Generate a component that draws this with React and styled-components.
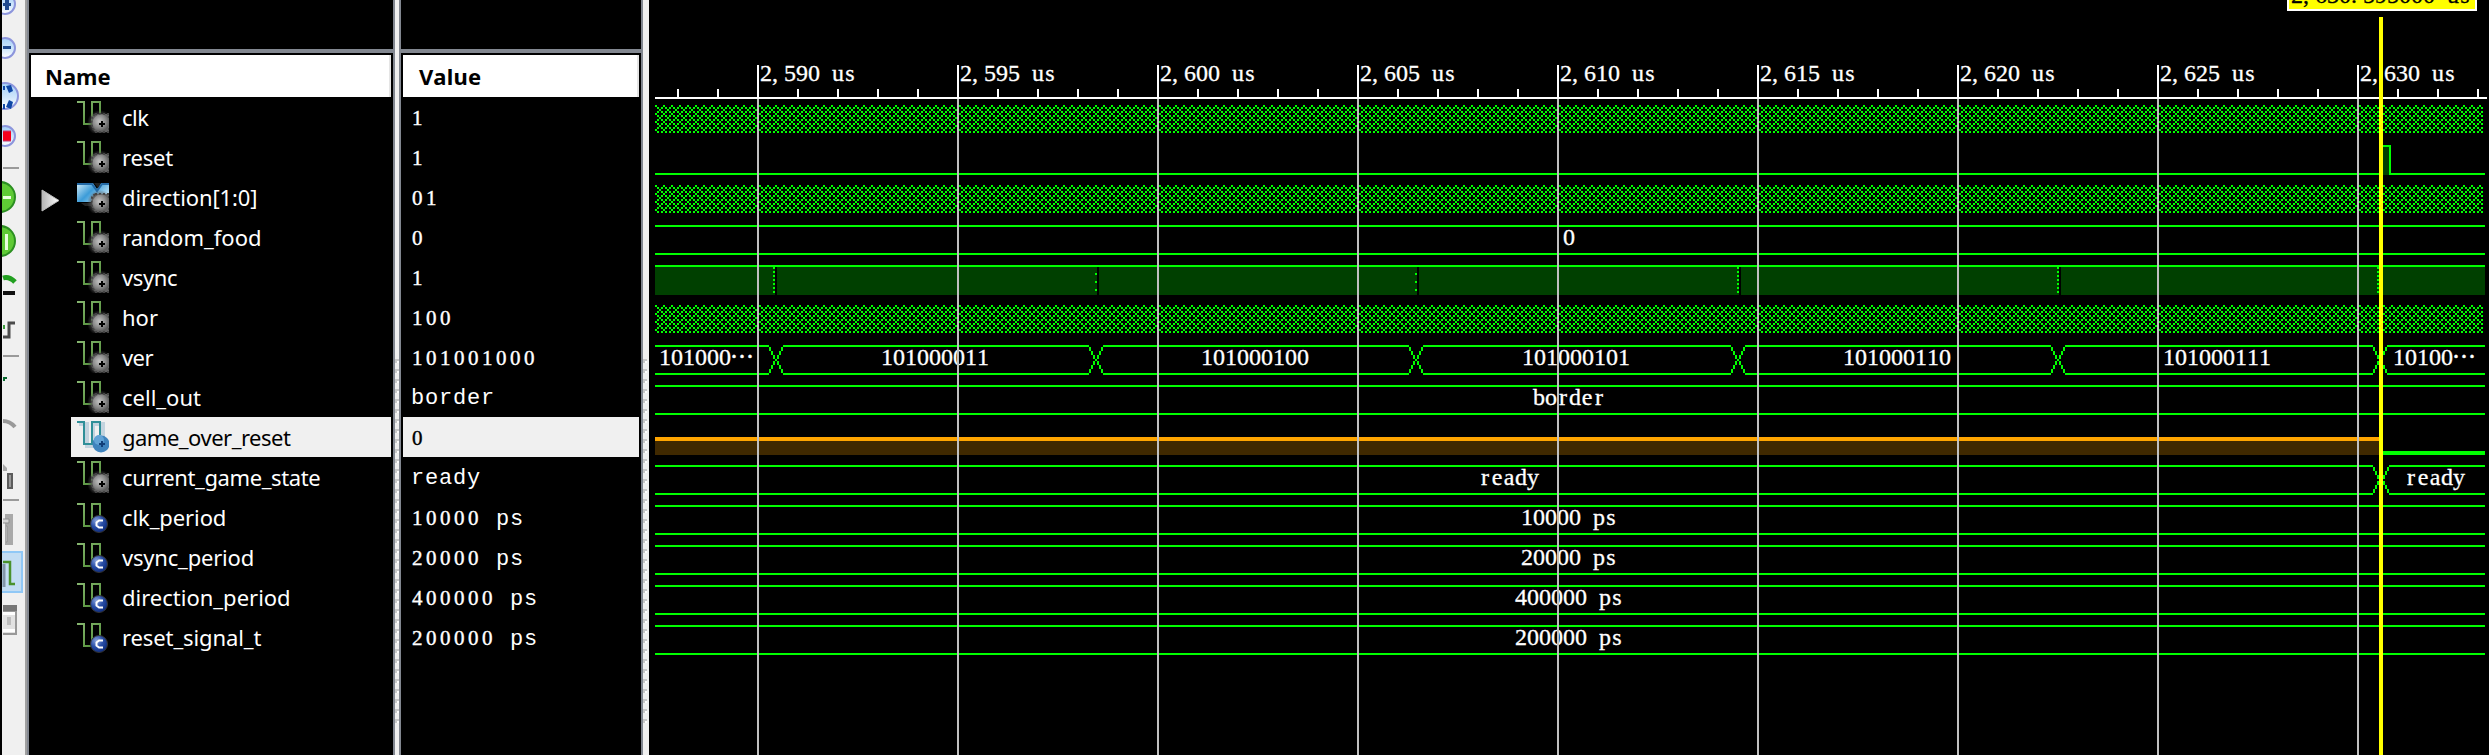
import React from 'react';
import styled, { createGlobalStyle } from 'styled-components';

const GREEN = '#00ff00';
const ROW = 40;
const LANE_LEFT = 655;
const LANE_RIGHT = 2485;
const LANE_WIDTH = 1834;
const CURSOR_X = 2379;

const Global = createGlobalStyle`
  html, body { margin: 0; background: #000; }
  body { overflow: hidden; }
  svg { display: block; }
`;

const Window = styled.div`
  position: relative;
  display: flex;
  width: 2489px;
  height: 755px;
  background: #000;
  overflow: hidden;
  font-family: "Noto Sans", sans-serif;
  color: #fff;
`;

const Toolbar = styled.div`
  box-sizing: border-box;
  display: flex;
  flex-direction: column;
  flex: none;
  width: 27px;
  margin-left: 2px;
  background: #f0f0f0;
  border-right: 2px solid #828790;
  box-shadow: inset -2px 0 0 #a0a0a0;
`;

const Panel = styled.div`
  display: flex;
  flex-direction: column;
  flex: none;
  width: ${(p) => p.$width}px;
  border-right: 2px solid #828790;
`;

const PanelTop = styled.div`
  height: 49px;
  border-bottom: 4px solid #828790;
  margin-bottom: 2px;
`;

const PanelHeader = styled.div`
  box-sizing: border-box;
  height: 42px;
  margin: 0 2px;
  padding-left: ${(p) => p.$indent}px;
  background: #fff;
  border-right: 2px solid #e5e5e5;
  color: #000;
  font-size: 22px;
  font-weight: 700;
  line-height: 43px;
  letter-spacing: ${(p) => p.$tracking || 0}px;
`;

const Splitter = styled.div`
  box-sizing: border-box;
  flex: none;
  width: ${(p) => p.$width}px;
  padding-top: 359px;
  background: #f0f0f0;
  border-right: ${(p) => (p.$edge ? '2px solid #828790' : 'none')};
`;

const Grip = styled.div`
  width: 4px;
  height: 364px;
  background:
    repeating-linear-gradient(to bottom, #c8c8c8 0 2px, transparent 2px 10px),
    repeating-linear-gradient(to bottom, transparent 0 2px, #c8c8c8 2px 4px, transparent 4px 10px) 0 0 / 2px 100% no-repeat,
    repeating-linear-gradient(to bottom, transparent 0 2px, #fff 2px 4px, transparent 4px 10px) 2px 0 / 2px 100% no-repeat;
`;

const SignalRow = styled.div`
  display: flex;
  align-items: flex-start;
  height: ${ROW}px;
  margin: 0 2px 0 42px;
  padding-left: 6px;
  background: ${(p) => (p.$selected ? '#f0f0f0' : 'transparent')};
  color: ${(p) => (p.$selected ? '#000' : '#fff')};
`;

const ExpandArrow = styled.svg`
  flex: none;
  width: 20px;
  height: 24px;
  margin: 12px 16px 0 -36px;
`;

const SignalIcon = styled.svg`
  flex: none;
  width: 32px;
  height: 32px;
  margin-top: ${(p) => (p.$constant ? 6 : 4)}px;
`;

const SignalName = styled.span`
  margin-left: 13px;
  font-size: 22px;
  line-height: 40px;
  letter-spacing: ${(p) => p.$tracking || 0}px;
  white-space: nowrap;
`;

const ValueRow = styled.div`
  height: ${ROW}px;
  margin: 0 2px;
  padding-left: 8px;
  background: ${(p) => (p.$selected ? '#f0f0f0' : 'transparent')};
  color: ${(p) => (p.$selected ? '#000' : '#fff')};
  line-height: 42px;
  white-space: pre;
`;

const Digits = styled.span`
  font-family: "Liberation Serif", serif;
  font-size: 21px;
  letter-spacing: 3.5px;
  padding-left: 1px;
  -webkit-text-stroke: 0.4px currentColor;
`;

const Letters = styled.span`
  font-family: "Liberation Mono", monospace;
  font-size: 22px;
  letter-spacing: 0.8px;
`;

const WavePanel = styled.div`
  display: flex;
  flex-direction: column;
  flex: none;
  width: ${LANE_WIDTH}px;
  padding-left: 6px;
`;

const Ruler = styled.svg`
  width: ${LANE_WIDTH}px;
  height: 97px;
`;

const Lane = styled.svg`
  width: ${LANE_WIDTH}px;
  height: ${ROW}px;
`;

const GridOverlay = styled.svg`
  position: absolute;
  left: ${LANE_LEFT}px;
  top: 0;
  width: ${LANE_WIDTH}px;
  height: 755px;
`;

const CursorLabel = styled.div`
  position: absolute;
  left: 2287px;
  top: -21px;
  box-sizing: border-box;
  width: 190px;
  height: 32px;
  background: #ff0;
  border: 2px solid #fff;
`;

const WaveText = styled.text`
  fill: ${(p) => p.$color || '#fff'};
  stroke: ${(p) => p.$color || '#fff'};
  stroke-width: 0.3px;
  font-family: "Liberation Serif", "Noto Sans CJK SC", serif;
  font-size: 24px;
  text-anchor: middle;
`;

const Dots = styled.tspan`
  font-family: "Noto Sans CJK SC", sans-serif;
`;

/* Sets each character in its own 12px cell. */
function CellText({ x, y, children, color, dots }) {
  const xs = [...children]
    .map((c, i) => x + i * 12 + 6 - (c === ',' || c === '.' ? 3 : 0))
    .join(' ');
  return (
    <WaveText x={xs} y={y} $color={color}>
      {children}
      {dots && <Dots x={x + children.length * 12 + 11}>…</Dots>}
    </WaveText>
  );
}

const SIGNALS = [
  { name: 'clk', icon: 'signal', value: '1', tracking: -0.5, wave: 'hatch' },
  { name: 'reset', icon: 'signal', value: '1', tracking: -0.2, wave: 'reset' },
  { name: 'direction[1:0]', icon: 'bus', value: '01', tracking: -0.1, wave: 'hatch' },
  { name: 'random_food', icon: 'signal', value: '0', wave: 'flat', label: '0' },
  { name: 'vsync', icon: 'signal', value: '1', tracking: -0.4, wave: 'vsync' },
  { name: 'hor', icon: 'signal', value: '100', wave: 'hatch' },
  { name: 'ver', icon: 'signal', value: '101001000', tracking: -0.6, wave: 'ver' },
  { name: 'cell_out', icon: 'signal', value: 'border', wave: 'flat', label: 'border' },
  { name: 'game_over_reset', icon: 'picked', value: '0', tracking: -0.5, wave: 'gameover', selected: true },
  { name: 'current_game_state', icon: 'signal', value: 'ready', tracking: -0.4, wave: 'state' },
  { name: 'clk_period', icon: 'constant', value: '10000', unit: ' ps', tracking: -0.1, wave: 'flat', label: '10000 ps' },
  { name: 'vsync_period', icon: 'constant', value: '20000', unit: ' ps', tracking: -0.2, wave: 'flat', label: '20000 ps' },
  { name: 'direction_period', icon: 'constant', value: '400000', unit: ' ps', wave: 'flat', label: '400000 ps' },
  { name: 'reset_signal_t', icon: 'constant', value: '200000', unit: ' ps', tracking: -0.1, wave: 'flat', label: '200000 ps' },
];

function Defs() {
  return (
    <svg width="0" height="0" aria-hidden="true">
      <defs>
        <pattern id="hatch" x={LANE_LEFT} y="8" width="8" height="8" patternUnits="userSpaceOnUse">
          <path
            d="M0 0h2v2h-2zM2 2h2v2h-2zM6 2h2v2h-2zM4 4h2v2h-2zM2 6h2v2h-2zM6 6h2v2h-2z"
            fill={GREEN}
            shapeRendering="crispEdges"
          />
        </pattern>
        <radialGradient id="grayBadge" cx="0.4" cy="0.4" r="0.6">
          <stop offset="0" stopColor="#c4c4c4" />
          <stop offset="0.6" stopColor="#8c8c8c" />
          <stop offset="1" stopColor="#5c5c5c" />
        </radialGradient>
        <radialGradient id="halo">
          <stop offset="0.5" stopColor="#555" />
          <stop offset="1" stopColor="#555" stopOpacity="0" />
        </radialGradient>
        <radialGradient id="blueBadge" cx="0.35" cy="0.3" r="0.75">
          <stop offset="0" stopColor="#8ba4dc" />
          <stop offset="0.5" stopColor="#2a4fa8" />
          <stop offset="1" stopColor="#0c2a7c" />
        </radialGradient>
        <linearGradient id="trace" x1="0" y1="0" x2="1" y2="1">
          <stop offset="0" stopColor="#86b570" />
          <stop offset="1" stopColor="#4f8f35" />
        </linearGradient>
        <linearGradient id="bus" x1="0" y1="0" x2="1" y2="0.6">
          <stop offset="0" stopColor="#d4ecf8" />
          <stop offset="0.5" stopColor="#3c9cd8" />
          <stop offset="1" stopColor="#c2e4f6" />
        </linearGradient>
        <linearGradient id="arrow" x1="0" y1="0" x2="1" y2="0">
          <stop offset="0" stopColor="#b4b4b4" />
          <stop offset="1" stopColor="#fff" />
        </linearGradient>
        <linearGradient id="lens" x1="0" y1="0" x2="0" y2="1">
          <stop offset="0" stopColor="#a4d0f8" />
          <stop offset="0.55" stopColor="#cfe6fb" />
          <stop offset="1" stopColor="#fff" />
        </linearGradient>
      </defs>
    </svg>
  );
}

function GrayBadge() {
  return (
    <g>
      <circle cx="23" cy="22" r="13" fill="url(#halo)" />
      <path d="M18 13h14v18h-14l-3-5v-10z" fill="#606060" strokeDasharray="2 2" stroke="#444" strokeWidth="2" />
      <circle cx="24" cy="22" r="8.5" fill="url(#grayBadge)" />
      <path d="M24 20h2v2h2v2h-2v2h-2v-2h-2v-2h2z" fill="#000" />
    </g>
  );
}

function Icon({ kind }) {
  if (kind === 'bus') {
    return (
      <SignalIcon viewBox="0 0 32 32">
        <path d="M0 2h16l4 6 4-6h8v19h-8l-4-5-5 5h-15z" fill="url(#bus)" />
        <path d="M0 3h15l5 7 5-7h7" fill="none" stroke="#246aa6" strokeWidth="2" />
        <path d="M17 2h7l-3 5z" fill="#222" />
        <path d="M4 22h14v3h-10z" fill="#222" />
        <GrayBadge />
      </SignalIcon>
    );
  }
  const picked = kind === 'picked';
  return (
    <SignalIcon viewBox="0 0 32 32" $constant={kind === 'constant'}>
      {picked && <path d="M2 3h8v22h6v-22h10v22" fill="none" stroke="#c3d3de" strokeWidth="4" />}
      <path d="M0 1h7v22h8v-22h8v13" fill="none" stroke={picked ? '#2f8f98' : 'url(#trace)'} strokeWidth="2" />
      {kind === 'signal' && <GrayBadge />}
      {picked && (
        <g>
          <circle cx="24" cy="23" r="8.500" fill="#3f83bd" />
          <circle cx="22" cy="19" r="5" fill="#62a3d6" />
          <path d="M24 20h2v2h2v2h-2v2h-2v-2h-2v-2h2z" fill="#123f78" />
        </g>
      )}
      {kind === 'constant' && (
        <g>
          <circle cx="22" cy="21" r="8.5" fill="url(#blueBadge)" stroke="#333" strokeWidth="1" />
          <path d="M26 17.500h-4l-2.500 2v3l2.500 2h4" fill="none" stroke="#fff" strokeWidth="2" />
        </g>
      )}
    </SignalIcon>
  );
}

/* Crossing of a bus transition: 2px staircase arms between the two rails. */
function Cross({ x, width = 14 }) {
  const steps = [];
  for (let i = 0; i < 3; i += 1) {
    [x + i * 2, x + width - 2 - i * 2].forEach((px) => {
      steps.push(<rect key={`a${px}`} x={px} y={10 + i * 4} width="2" height="4" />);
      steps.push(<rect key={`b${px}`} x={px} y={32 - i * 4} width="2" height="4" />);
    });
  }
  return (
    <g fill={GREEN}>
      {steps}
      <rect x={x + 6} y="22" width="2" height="2" />
    </g>
  );
}

function Rails({ from, to }) {
  return (
    <g fill={GREEN}>
      <rect x={from} y="8" width={to - from} height="2" />
      <rect x={from} y="36" width={to - from} height="2" />
    </g>
  );
}

const VER_CROSSES = [769, 1089, 1409, 1731, 2051, 2373];
const VER_LABELS = [
  [881, '101000011'],
  [1201, '101000100'],
  [1522, '101000101'],
  [1843, '101000110'],
  [2163, '101000111'],
];
const VSYNC_GAPS = [[775, 4], [1097, 8], [1417, 8], [1739, 4], [2059, 4], [2379, 4]];

function Wave({ signal }) {
  switch (signal.wave) {
    case 'hatch':
      return <rect x={LANE_LEFT} y="8" width="1828" height="28" fill="url(#hatch)" />;
    case 'reset':
      return (
        <g fill={GREEN}>
          <rect x={LANE_LEFT} y="36" width="1728" height="2" />
          <rect x="2383" y="10" width="6" height="28" fill="#004000" />
          <path d="M2380 8h11v28h94v2h-96v-28h-9z" />
        </g>
      );
    case 'vsync':
      return (
        <g fill={GREEN}>
          <rect x={LANE_LEFT} y="10" width="1830" height="28" fill="#004000" />
          <rect x={LANE_LEFT} y="8" width="1830" height="2" />
          {VSYNC_GAPS.map(([x, step]) => (
            <g key={x}>
              <rect x={x} y="10" width="2" height="28" fill="#000" />
              {Array.from({ length: step === 4 ? 7 : 3 }, (_, i) => (
                <rect key={i} x={x - 2} y={(step === 4 ? 10 : 16) + i * step} width="2" height="2" />
              ))}
            </g>
          ))}
        </g>
      );
    case 'ver':
      return (
        <g>
          {[LANE_LEFT, ...VER_CROSSES.map((x) => x + 14)].map((from, i) => (
            <Rails key={from} from={from} to={VER_CROSSES[i] || LANE_RIGHT} />
          ))}
          {VER_CROSSES.map((x) => <Cross key={x} x={x} />)}
          <CellText x={659} y={28} dots>101000</CellText>
          {VER_LABELS.map(([x, t]) => <CellText key={x} x={x} y={28}>{t}</CellText>)}
          <CellText x={2393} y={28} dots>10100</CellText>
        </g>
      );
    case 'gameover':
      return (
        <g>
          <rect x={LANE_LEFT} y="24" width="1724" height="14" fill="#402900" />
          <rect x={LANE_LEFT} y="20" width="1724" height="4" fill="#ffa500" />
          <rect x="2383" y="34" width="102" height="4" fill={GREEN} />
        </g>
      );
    case 'state':
      return (
        <g>
          <Rails from={LANE_LEFT} to={2373} />
          <Rails from={2389} to={LANE_RIGHT} />
          <Cross x={2373} width={16} />
          <CellText x={1479} y={28}>ready</CellText>
          <CellText x={2405} y={28}>ready</CellText>
        </g>
      );
    default:
      return (
        <g>
          <Rails from={LANE_LEFT} to={LANE_RIGHT} />
          <CellText x={1569 - signal.label.length * 6} y={28}>{signal.label}</CellText>
        </g>
      );
  }
}

const MAJOR = Array.from({ length: 9 }, (_, i) => ({ x: 757 + i * 200, text: `2,${590 + i * 5} us` }));
const MINOR = Array.from({ length: 46 }, (_, i) => 677 + i * 40).filter((x) => (x - 757) % 200 !== 0);

function Lens({ cy, r = 10 }) {
  return <circle cx="5" cy={cy} r={r} fill="url(#lens)" stroke="#8c95dc" strokeWidth="2" />;
}

const Rule = () => <rect x="3" y="1" width="16" height="2" fill="#9a9a9a" />;

/* Toolbar entries in order; `h` is the slot height. */
const TOOLS = [
  { h: 26, art: <g><Lens cy={4} /><path d="M3 3h8v3h-8zM5 0h4v10h-4z" fill="#1f4a90" /></g> },
  { h: 45, art: <g><Lens cy={22} /><path d="M3 20h8v3h-8z" fill="#1f4a90" /></g> },
  { h: 47, art: <g><Lens cy={25} r={13} /><path d="M6 15l5-1 2 6-4 2zM6 36l5 2 2-7-4-2zM3 15h2v4h-2zM3 33h2v5h-2z" fill="#0f47a6" /></g> },
  { h: 48, art: <g><Lens cy={18} /><rect x="3" y="13" width="8" height="10" fill="#f8001c" /><path d="M3 13h8M3 23h8" stroke="#c04078" strokeWidth="1" /></g> },
  { h: 10, art: <Rule /> },
  { h: 44, art: <g><circle cx="0" cy="21" r="15" fill="#5fca35" stroke="#2c8f22" strokeWidth="2" /><path d="M3 20h8v3h-8z" fill="#eaffdf" /></g> },
  { h: 44, art: <g><circle cx="0" cy="21" r="15" fill="#5fca35" stroke="#2c8f22" strokeWidth="2" /><path d="M5 14h3v16h-3z" fill="#eaffdf" /></g> },
  { h: 44, art: <g><path d="M3 14q6-2 12 4" fill="none" stroke="#22a020" strokeWidth="5" /><rect x="3" y="27" width="12" height="4" fill="#111" /></g> },
  { h: 46, art: <g><rect x="3" y="17" width="2" height="4" fill="#3c9c3c" /><path d="M3 29h6v-14h6" fill="none" stroke="#4b4b4b" strokeWidth="3" /></g> },
  { h: 20, art: <Rule /> },
  { h: 36, art: <path d="M3 3h4v2h-2v2h-2z" fill="#0b6b31" /> },
  { h: 40, art: <path d="M3 11q7 0 12 6" fill="none" stroke="#999" strokeWidth="4" /> },
  { h: 48, art: <g><path d="M3 14l4 4v3h-4z" fill="#aaa" /><rect x="8" y="24" width="4" height="14" fill="#999" stroke="#5c5c5c" strokeWidth="2" /></g> },
  { h: 10, art: <Rule /> },
  { h: 43, art: <g><rect x="5" y="6" width="8" height="31" fill="#a9a9a9" /><path d="M3 11h6v4h-6M6 18h1v16h-1" fill="#d6d6d6" stroke="#8f8f8f" strokeWidth="1" /></g> },
  { h: 44, art: <g><rect x="1" y="1" width="21" height="40" fill="#c3ddf3" stroke="#90c8f6" strokeWidth="2" /><path d="M4 13v23" stroke="#8396a8" strokeWidth="3" /><path d="M3 11h7v22h5" fill="none" stroke="#4a922c" strokeWidth="2.5" /></g> },
  { h: 60, art: <g><rect x="3" y="10" width="14" height="6" fill="#777" /><path d="M3 17h13v22h-13" fill="#e2e2e2" stroke="#999" strokeWidth="2" /><path d="M3 17h12v3h-12zM3 34h12v3h-12z" fill="#fff" /><rect x="7" y="22" width="4" height="8" fill="#bdbdbd" /></g> },
];

const ToolSlot = styled.svg`
  flex: none;
  width: 23px;
  height: ${(p) => p.$height}px;
`;

export default function App() {
  return (
    <Window>
      <Global />
      <Toolbar>
        {TOOLS.map((t, i) => (
          <ToolSlot key={i} $height={t.h} viewBox={`2 0 23 ${t.h}`}>{t.art}</ToolSlot>
        ))}
      </Toolbar>

      <Panel $width={364}>
        <PanelTop />
        <PanelHeader $indent={14}>Name</PanelHeader>
        {SIGNALS.map((s) => (
          <SignalRow key={s.name} $selected={s.selected}>
            {s.icon === 'bus' && (
              <ExpandArrow viewBox="0 0 20 24">
                <path d="M1 1l17 10.500-17 10.500z" fill="url(#arrow)" stroke="#bbb" strokeWidth="1" />
              </ExpandArrow>
            )}
            <Icon kind={s.icon} />
            <SignalName $tracking={s.tracking}>{s.name}</SignalName>
          </SignalRow>
        ))}
      </Panel>
      <Splitter $width={6} $edge><Grip /></Splitter>

      <Panel $width={240}>
        <PanelTop />
        <PanelHeader $indent={16} $tracking={0.3}>Value</PanelHeader>
        {SIGNALS.map((s) => (
          <ValueRow key={s.name} $selected={s.selected}>
            {/^\d/.test(s.value) ? <Digits>{s.value}</Digits> : <Letters>{s.value}</Letters>}
            {s.unit && <Letters>{s.unit}</Letters>}
          </ValueRow>
        ))}
      </Panel>
      <Splitter $width={6}><Grip /></Splitter>

      <WavePanel>
        <Ruler viewBox={`${LANE_LEFT} 0 ${LANE_WIDTH} 97`}>
          {MAJOR.map((m) => <CellText key={m.x} x={m.x + 3} y={81}>{m.text}</CellText>)}
        </Ruler>
        {SIGNALS.map((s) => (
          <Lane key={s.name} viewBox={`${LANE_LEFT} 0 ${LANE_WIDTH} ${ROW}`} shapeRendering="crispEdges">
            <Wave signal={s} />
          </Lane>
        ))}
        <Defs />
      </WavePanel>

      <GridOverlay viewBox={`${LANE_LEFT} 0 ${LANE_WIDTH} 755`} shapeRendering="crispEdges">
        {MAJOR.map((m) => (
          <g key={m.x}>
            <rect x={m.x} y="65" width="2" height="32" fill="#fff" />
            <rect x={m.x} y="99" width="2" height="656" fill="#c0c0c0" />
          </g>
        ))}
        {MINOR.map((x) => <rect key={x} x={x} y="89" width="2" height="8" fill="#fff" />)}
        <rect x={LANE_LEFT} y="97" width="1832" height="2" fill="#fff" />
        <rect x={CURSOR_X} y="17" width="4" height="738" fill="#ff0" />
      </GridOverlay>
      <CursorLabel>
        <svg width="186" height="28" viewBox="0 0 186 28">
          <CellText x={2} y={22} color="#000">2,630.595000 us</CellText>
        </svg>
      </CursorLabel>
    </Window>
  );
}
